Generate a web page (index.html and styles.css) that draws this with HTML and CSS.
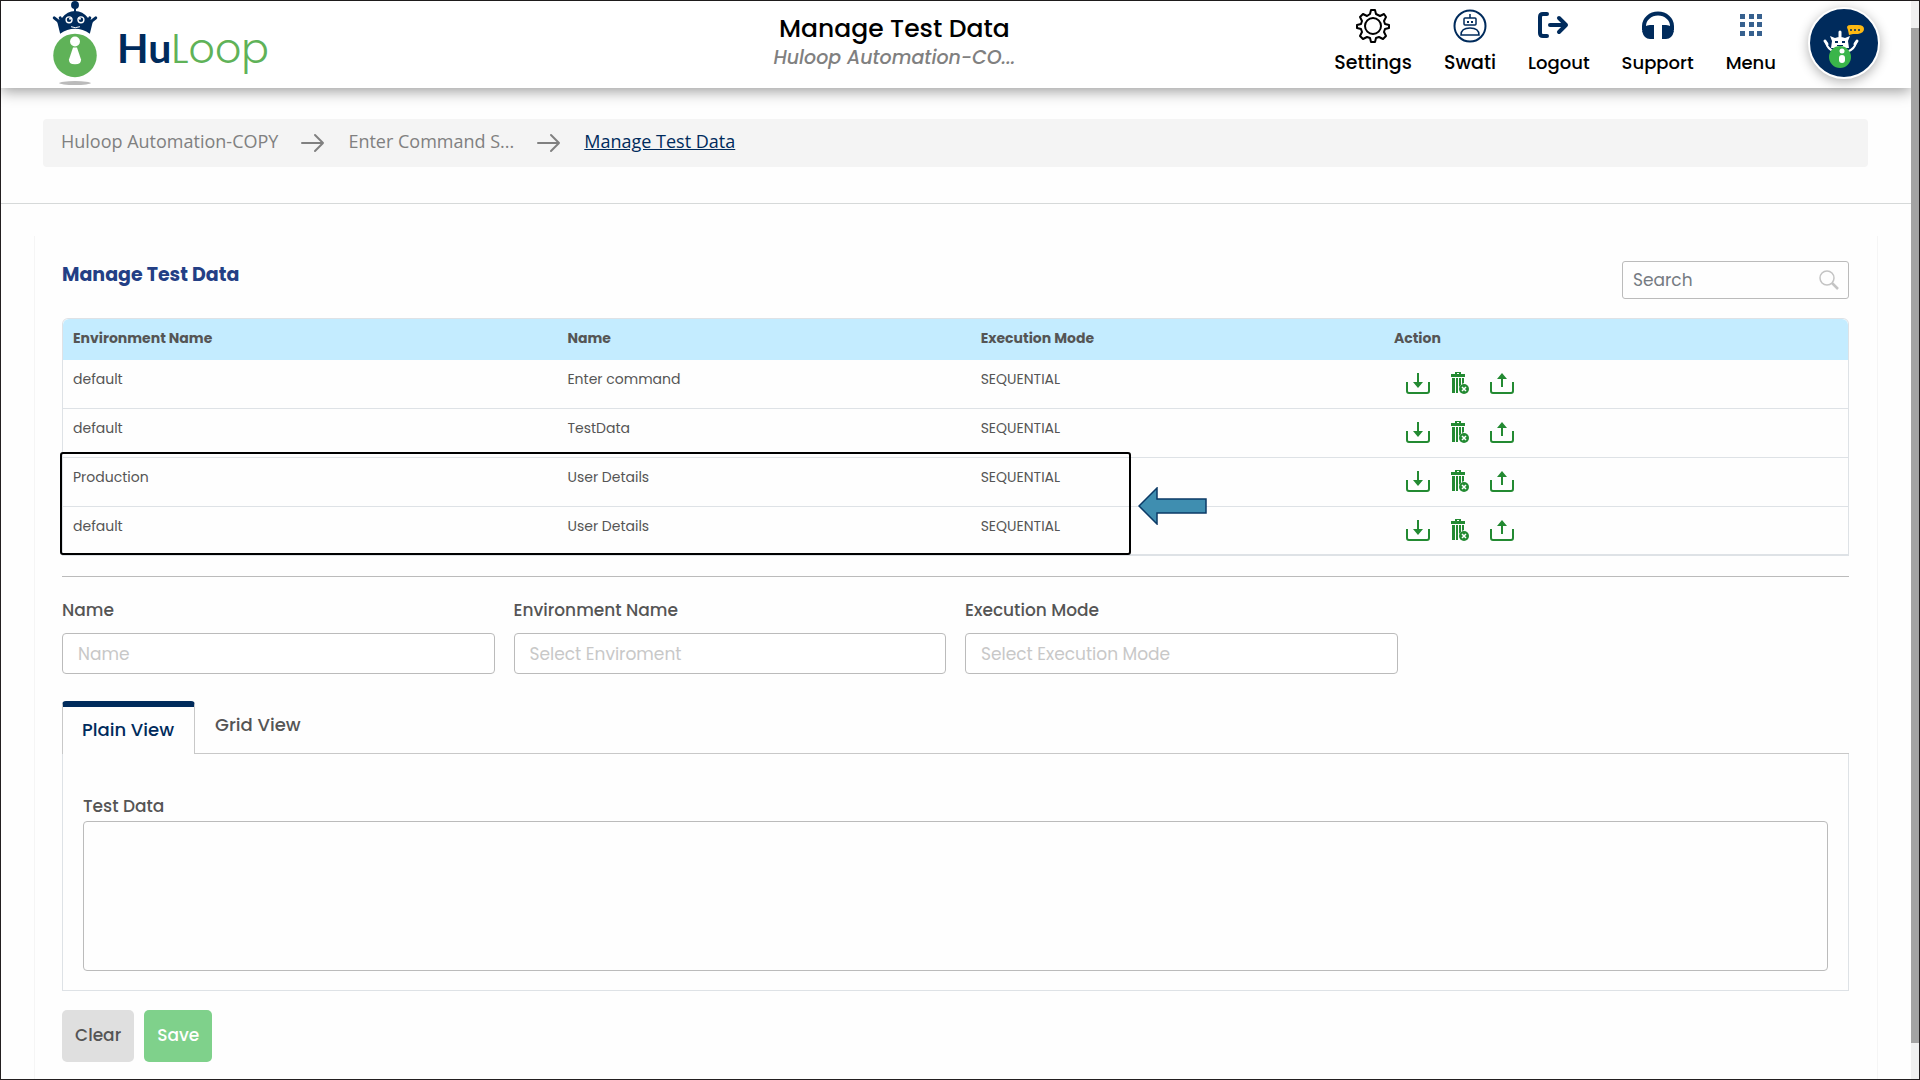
FILE: index.html
```html
<!DOCTYPE html>
<html lang="en">
<head>
    <meta charset="UTF-8">
    <meta name="viewport" content="width=device-width, initial-scale=1.0">
    <title>HuLoop - Manage Test Data</title>
    <link rel="stylesheet" href="styles.css">
</head>
<body>
    <!-- Shared icon shapes -->
    <svg class="icon-defs" aria-hidden="true">
        <symbol id="icon-download" viewBox="0 0 26 24">
            <path d="M2 10v9q0 2 2 2h18q2 0 2-2v-9" fill="none" stroke="currentColor" stroke-width="2"/>
            <path d="M12 1h2v9h4l-5 6-5-6h4z" fill="currentColor"/>
        </symbol>
        <symbol id="icon-upload" viewBox="0 0 26 24">
            <path d="M2 10v9q0 2 2 2h18q2 0 2-2v-9" fill="none" stroke="currentColor" stroke-width="2"/>
            <path d="M12 15h2V7h4l-5-6-5 6h4z" fill="currentColor"/>
        </symbol>
        <symbol id="icon-trash" viewBox="0 0 18 24">
            <path d="M0 2h4V0h6v2h4v3H0zM6 1v1h2V1zM1 6h3v15H1zM5 6h2v15H5zM8 6h2v7l-2 2zM11 6h2v5l-2 1z" fill="currentColor"/>
            <circle cx="13" cy="17" r="5" fill="currentColor"/>
            <path d="M11 15l4 4M15 15l-4 4" stroke="#fff" stroke-width="1.5"/>
        </symbol>
        <symbol id="icon-arrow" viewBox="0 0 24 20">
            <path d="M1 10h21M14 2l8 8-8 8" fill="none" stroke="currentColor" stroke-width="2" stroke-linecap="round" stroke-linejoin="round"/>
        </symbol>
    </svg>

    <div class="page">
        <div class="content">
            <header class="header">
                <a href="#" class="logo">
                    <svg class="logo-mark" viewBox="0 0 48 88" aria-hidden="true">
                        <ellipse cx="24" cy="83" rx="16" ry="2" fill="#bbb"/>
                        <circle cx="24" cy="4" r="4" fill="#002b5c"/>
                        <path d="M23 6h2v6h-2z" fill="#002b5c"/>
                        <path d="M9 33 6 21q3-1 5-4Q16 10 24 10t13 7q2 3 5 4l-3 12q-7-5-15-5T9 33z" fill="#002b5c"/>
                        <path d="M3 17l5 4M45 17l-5 4M9 17l2 5M39 17l-2 5" stroke="#002b5c" stroke-width="3" stroke-linecap="round"/>
                        <circle cx="18" cy="19" r="3" fill="#002b5c" stroke="#fff" stroke-width="1.4"/>
                        <circle cx="30" cy="19" r="3" fill="#002b5c" stroke="#fff" stroke-width="1.4"/>
                        <circle cx="19" cy="18" r="1" fill="#fff"/>
                        <circle cx="29" cy="18" r="1" fill="#fff"/>
                        <path d="M20 26q4 2 9 0" fill="none" stroke="#fff"/>
                        <circle cx="24" cy="55" r="22" fill="#5fb258"/>
                        <circle cx="24" cy="41" r="5" fill="#fff"/>
                        <path d="M22 47h4l4 12q1 5-6 5t-6-5z" fill="#fff"/>
                    </svg>
                    <span class="logo-text"><b>Hu</b>Loop</span>
                </a>
                <div class="page-heading">
                    <h1>Manage Test Data</h1>
                    <p>Huloop Automation-CO...</p>
                </div>
                <nav class="top-nav">
                    <a href="#" class="nav-item">
                        <svg viewBox="0 0 34 34" fill="none" stroke="#000" stroke-width="2" stroke-linejoin="round">
                            <path d="M14 5 15 1h4l1 4 4 2 4-2 2 3-2 4 1 3 4 1v3l-4 1-1 3 2 4-3 3-4-2-3 1-1 4h-4l-1-4-3-1-4 2-3-3 2-4-1-3-4-1v-3l4-1 1-3-2-4 3-3 4 2z"/>
                            <circle cx="17" cy="17" r="8"/>
                        </svg>
                        <span>Settings</span>
                    </a>
                    <a href="#" class="nav-item">
                        <svg viewBox="0 0 34 34" fill="none" stroke="#002b5c" stroke-width="1.5">
                            <circle cx="17" cy="17" r="15.5" stroke-width="2"/>
                            <rect x="11" y="9" width="12" height="7" rx="1"/>
                            <path d="M17 9V5M8 26q0-7 9-7t9 7z"/>
                            <path d="M14 12h2v2h-2zM18 12h2v2h-2z" fill="#002b5c" stroke="none"/>
                        </svg>
                        <span>Swati</span>
                    </a>
                    <a href="#" class="nav-item nav-small nav-logout">
                        <svg viewBox="0 0 34 34" fill="none" stroke="#002b5c" stroke-width="4" stroke-linecap="round" stroke-linejoin="round">
                            <path d="M11 5H7Q4 5 4 8v16q0 3 3 3h4M14 16h16M23 9l7 7-7 7"/>
                        </svg>
                        <span>Logout</span>
                    </a>
                    <a href="#" class="nav-item nav-small">
                        <svg viewBox="0 0 34 34" fill="none">
                            <path d="M3 21v-4a14 12.5 0 0 1 28 0v4" stroke="#002b5c" stroke-width="4"/>
                            <path d="M13 16v14H9q-6 0-8-8 2-6 8-6zM21 16v14h4q6 0 8-8-2-6-8-6z" fill="#002b5c"/>
                        </svg>
                        <span>Support</span>
                    </a>
                    <a href="#" class="nav-item nav-small">
                        <svg viewBox="0 0 34 34" fill="#37618f">
                            <path d="M6 5h5v5H6zM15 5h5v5h-5zM23 5h5v5h-5zM6 13h5v5H6zM15 13h5v5h-5zM23 13h5v5h-5zM6 22h5v5H6zM15 22h5v5h-5zM23 22h5v5h-5z"/>
                        </svg>
                        <span>Menu</span>
                    </a>
                    <button type="button" class="assistant-btn" aria-label="Assistant">
                        <svg viewBox="0 0 68 68">
                            <path d="M16 33q1 7 9 10M46 33q-1 7-9 10" fill="none" stroke="#fff" stroke-width="2"/>
                            <path d="M15 32l2 3M47 32l-2 3M30 23v5" stroke="#fff" stroke-width="3" stroke-linecap="round"/>
                            <path d="M20 27l5 2q5-2 10 0l5-2-2 5 1 7H21l1-7z" fill="#fff"/>
                            <path d="M25 32h3v2h-3zM32 32h3v2h-3zM27 36h6v1h-6z" fill="#002b5c"/>
                            <circle cx="30" cy="48" r="11" fill="#3ab54a"/>
                            <circle cx="32" cy="42" r="2.5" fill="#fff"/>
                            <rect x="29" y="46" width="6" height="8" rx="3" fill="#fff"/>
                            <path d="M39 26l-1-5q-3-5 3-5h7q6 0 6 4t-6 5h-5z" fill="#fdb913"/>
                            <circle cx="41" cy="21" r="1" fill="#002b5c"/>
                            <circle cx="45" cy="21" r="1" fill="#002b5c"/>
                            <circle cx="49" cy="21" r="1" fill="#002b5c"/>
                        </svg>
                    </button>
                </nav>
            </header>

            <div class="breadcrumb-wrap">
                <nav class="breadcrumb" aria-label="Breadcrumb">
                    <a href="#">Huloop Automation-COPY</a>
                    <svg><use href="#icon-arrow"/></svg>
                    <a href="#">Enter Command S...</a>
                    <svg><use href="#icon-arrow"/></svg>
                    <a href="#" class="current">Manage Test Data</a>
                </nav>
            </div>

            <main class="panel">
                <div class="panel-head">
                    <h2>Manage Test Data</h2>
                    <div class="search-box">
                        <input type="search" placeholder="Search" aria-label="Search">
                        <svg viewBox="0 0 20 20" fill="none" stroke="#c4c4c4">
                            <circle cx="8" cy="8" r="7" stroke-width="1.5"/>
                            <path d="M13 13l6 6" stroke-width="2.5"/>
                        </svg>
                    </div>
                </div>

                <div class="table-wrap">
                    <table class="data-table">
                        <thead>
                            <tr>
                                <th class="col-env">Environment Name</th>
                                <th class="col-name">Name</th>
                                <th class="col-mode">Execution Mode</th>
                                <th>Action</th>
                            </tr>
                        </thead>
                        <tbody>
                            <tr>
                                <td>default</td>
                                <td>Enter command</td>
                                <td>SEQUENTIAL</td>
                                <td>
                                    <div class="actions">
                                        <button type="button" aria-label="Download"><svg><use href="#icon-download"/></svg></button>
                                        <button type="button" class="delete" aria-label="Delete"><svg><use href="#icon-trash"/></svg></button>
                                        <button type="button" aria-label="Upload"><svg><use href="#icon-upload"/></svg></button>
                                    </div>
                                </td>
                            </tr>
                            <tr>
                                <td>default</td>
                                <td>TestData</td>
                                <td>SEQUENTIAL</td>
                                <td>
                                    <div class="actions">
                                        <button type="button" aria-label="Download"><svg><use href="#icon-download"/></svg></button>
                                        <button type="button" class="delete" aria-label="Delete"><svg><use href="#icon-trash"/></svg></button>
                                        <button type="button" aria-label="Upload"><svg><use href="#icon-upload"/></svg></button>
                                    </div>
                                </td>
                            </tr>
                            <tr>
                                <td>Production</td>
                                <td>User Details</td>
                                <td>SEQUENTIAL</td>
                                <td>
                                    <div class="actions">
                                        <button type="button" aria-label="Download"><svg><use href="#icon-download"/></svg></button>
                                        <button type="button" class="delete" aria-label="Delete"><svg><use href="#icon-trash"/></svg></button>
                                        <button type="button" aria-label="Upload"><svg><use href="#icon-upload"/></svg></button>
                                    </div>
                                </td>
                            </tr>
                            <tr>
                                <td>default</td>
                                <td>User Details</td>
                                <td>SEQUENTIAL</td>
                                <td>
                                    <div class="actions">
                                        <button type="button" aria-label="Download"><svg><use href="#icon-download"/></svg></button>
                                        <button type="button" class="delete" aria-label="Delete"><svg><use href="#icon-trash"/></svg></button>
                                        <button type="button" aria-label="Upload"><svg><use href="#icon-upload"/></svg></button>
                                    </div>
                                </td>
                            </tr>
                        </tbody>
                    </table>
                    <!-- Callout over the last two rows -->
                    <div class="callout-box"></div>
                    <svg class="callout-arrow" viewBox="0 0 70 38" aria-hidden="true">
                        <path d="M1 19 19 1v11h49v14H19v11z" fill="#3f8eb0" stroke="#0b3a66" stroke-width="1.5"/>
                    </svg>
                </div>

                <hr class="divider">

                <form>
                    <div class="form-row">
                        <div class="form-group">
                            <label for="name">Name</label>
                            <input type="text" id="name" placeholder="Name">
                        </div>
                        <div class="form-group">
                            <label for="environment">Environment Name</label>
                            <input type="text" id="environment" placeholder="Select Enviroment">
                        </div>
                        <div class="form-group">
                            <label for="mode">Execution Mode</label>
                            <input type="text" id="mode" placeholder="Select Execution Mode">
                        </div>
                    </div>

                    <div class="tabs" role="tablist">
                        <button type="button" role="tab" class="tab active" aria-selected="true">Plain View</button>
                        <button type="button" role="tab" class="tab" aria-selected="false">Grid View</button>
                    </div>
                    <div class="tab-panel">
                        <label for="testData">Test Data</label>
                        <textarea id="testData"></textarea>
                    </div>

                    <div class="buttons">
                        <button type="reset" class="btn">Clear</button>
                        <button type="submit" class="btn btn-save">Save</button>
                    </div>
                </form>
            </main>
        </div>
        <div class="scrollbar"><div class="thumb"></div></div>
    </div>
</body>
</html>
```
FILE: styles.css
```css
* {
    margin: 0;
    padding: 0;
    box-sizing: border-box;
}

body {
    background-color: #fefefe;
    color: #555;
    font-family: Poppins, Inter, sans-serif;
}

button,
input,
textarea {
    font-family: inherit;
}

a {
    color: inherit;
    text-decoration: none;
}

.icon-defs {
    display: none;
}

.page {
    display: flex;
    min-height: 100vh;
    border: 1px solid #231f20;
}

.content {
    flex: 1;
    display: flex;
    flex-direction: column;
}

/* Scrollbar */
.scrollbar {
    display: flex;
    flex-direction: column;
    width: 8px;
    padding-top: 27px;
    padding-bottom: 36px;
    background-color: #f0f0f0;
}

.thumb {
    flex: 1;
    background-color: #a3a3a3;
}

/* Header */
.header {
    display: grid;
    grid-template-columns: 25% 1fr auto;
    height: 87px;
    background-color: #fff;
    box-shadow: 0 3px 14px rgba(0, 0, 0, 0.4);
}

.logo {
    display: flex;
    padding-left: 50px;
}

.logo-mark {
    width: 48px;
    height: 87px;
}

.logo-text {
    padding: 22px 0 0 18px;
    color: #5fb258;
    font-size: 41px;
    font-weight: 300;
    line-height: 50px;
}

.logo-text b {
    color: #002b5c;
    font-family: Lato, sans-serif;
    font-weight: 700;
}

.page-heading {
    padding-top: 12px;
    text-align: center;
}

.page-heading h1 {
    color: #000;
    font-size: 25px;
    font-weight: 500;
    line-height: 32px;
}

.page-heading p {
    color: #808080;
    font-size: 19px;
    font-style: italic;
    font-weight: 500;
    line-height: 26px;
}

.top-nav {
    display: flex;
    gap: 32px;
    padding: 6px 31px 0 24px;
}

.nav-item {
    display: flex;
    flex-direction: column;
    align-items: center;
    gap: 7px;
    padding-top: 2px;
    color: #000;
    font-size: 19px;
    font-weight: 500;
    line-height: 26px;
}

.nav-small {
    font-size: 18px;
}

.nav-item svg {
    width: 34px;
    height: 34px;
}

.nav-logout svg {
    margin-right: 12px;
}

.assistant-btn {
    width: 72px;
    height: 72px;
    border: 2px solid #fff;
    border-radius: 50%;
    background-color: #002b5c;
    box-shadow: 0 3px 12px rgba(0, 0, 0, 0.3);
    cursor: pointer;
}

.assistant-btn svg {
    display: block;
    width: 68px;
    height: 68px;
}

/* Breadcrumb */
.breadcrumb-wrap {
    padding: 31px 43px 36px 42px;
    border-bottom: 1px solid #d6d9d9;
}

.breadcrumb {
    display: flex;
    align-items: center;
    height: 48px;
    padding: 0 18px 4px;
    border-radius: 4px;
    background-color: #f4f4f4;
    color: #808080;
    font-family: "Open Sans", sans-serif;
    font-size: 18px;
    font-weight: 400;
}

.breadcrumb svg {
    width: 24px;
    height: 20px;
    margin: 4px 23px 0;
}

.breadcrumb .current {
    color: #002b5c;
    text-decoration: underline;
}

/* Panel */
.panel {
    flex: 1;
    margin: 32px 33px 0;
    padding: 25px 28px 16px 27px;
    border-left: 1px solid #f5f5f5;
    border-right: 1px solid #f5f5f5;
}

.panel-head {
    display: flex;
    justify-content: space-between;
    margin-bottom: 19px;
}

.panel-head h2 {
    color: #233f85;
    font-size: 19px;
    font-weight: 700;
    line-height: 28px;
}

.search-box {
    display: flex;
    align-items: center;
    width: 227px;
    height: 38px;
    padding: 0 9px 0 10px;
    border: 1px solid #bbb;
    border-radius: 3px;
}

.search-box input {
    flex: 1;
    min-width: 0;
    border: none;
    outline: none;
    background: none;
    font-size: 17px;
}

.search-box input::placeholder {
    color: #757b82;
}

.search-box svg {
    width: 20px;
    height: 20px;
}

/* Table */
.table-wrap {
    position: relative;
    border: 1px solid #dee2e6;
    border-bottom-width: 2px;
    border-radius: 6px 6px 0 0;
}

.data-table {
    width: 100%;
    border-collapse: separate;
    border-spacing: 0;
    table-layout: fixed;
    font-size: 14px;
    line-height: 20px;
}

.col-env {
    width: 27.7%;
}

.col-name,
.col-mode {
    width: 23.15%;
}

.data-table th {
    height: 41px;
    padding: 0 10px 4px;
    background-color: #c4ecff;
    font-weight: 700;
    text-align: left;
}

.data-table th:first-child {
    border-top-left-radius: 6px;
}

.data-table th:last-child {
    border-top-right-radius: 6px;
}

.data-table td {
    height: 49px;
    padding: 9px 10px 0;
    vertical-align: top;
    border-bottom: 1px solid #dee2e6;
}

.data-table tr:last-child td {
    height: 47px;
    border-bottom: none;
}

.actions {
    display: flex;
    gap: 20px;
    padding: 3px 11px 0;
}

.actions button {
    width: 26px;
    height: 24px;
    border: none;
    background: none;
    color: #238a32;
    cursor: pointer;
}

.actions .delete {
    width: 18px;
}

.actions svg {
    display: block;
    width: 100%;
    height: 100%;
}

/* Callout */
.callout-box {
    position: absolute;
    left: -3px;
    bottom: -1px;
    width: 60%;
    height: 103px;
    border: 2px solid #000;
    border-radius: 3px;
}

.callout-arrow {
    position: absolute;
    left: 60%;
    bottom: 29px;
    width: 70px;
    height: 38px;
    margin-left: 4px;
}

.divider {
    margin: 20px 0 22px;
    border: none;
    border-top: 1px solid #bbb;
}

/* Form */
.form-row {
    display: grid;
    grid-template-columns: repeat(4, 1fr);
    gap: 19px;
    margin-bottom: 27px;
}

.form-group label,
.tab-panel label {
    display: block;
    font-size: 17px;
    font-weight: 500;
    line-height: 22px;
}

.form-group input {
    width: 100%;
    height: 41px;
    margin-top: 12px;
    padding: 0 15px;
    border: 1px solid #bbb;
    border-radius: 4px;
    background-color: #fff;
    font-size: 17px;
}

.form-group input::placeholder {
    color: #c8c8c8;
}

/* Tabs */
.tabs {
    display: flex;
    border-bottom: 1px solid #c8c8c8;
}

.tab {
    height: 52px;
    padding: 0 20px 6px;
    border: none;
    background: none;
    color: #555;
    font-size: 18px;
    font-weight: 500;
    cursor: pointer;
}

.tab.active {
    height: 53px;
    margin-bottom: -1px;
    padding: 0 20px 2px 19px;
    border: 1px solid #c8c8c8;
    border-top: 6px solid #002b5c;
    border-bottom: none;
    border-radius: 4px 4px 0 0;
    background-color: #fefefe;
    color: #002b5c;
}

.tab-panel {
    padding: 41px 20px 19px;
    border: 1px solid #dee2e6;
    border-top: none;
}

.tab-panel textarea {
    display: block;
    width: 100%;
    height: 150px;
    margin-top: 4px;
    padding: 10px;
    border: 1px solid #bbb;
    border-radius: 4px;
    background-color: #fefefe;
    font-size: 17px;
    resize: none;
}

.buttons {
    display: flex;
    gap: 10px;
    margin-top: 19px;
}

.btn {
    height: 52px;
    padding: 0 13px 2px;
    border: none;
    border-radius: 5px;
    background-color: #dfdfdf;
    color: #555;
    font-size: 17px;
    font-weight: 500;
    cursor: pointer;
}

.btn-save {
    background-color: #7fd18b;
    color: #fff;
}
```
